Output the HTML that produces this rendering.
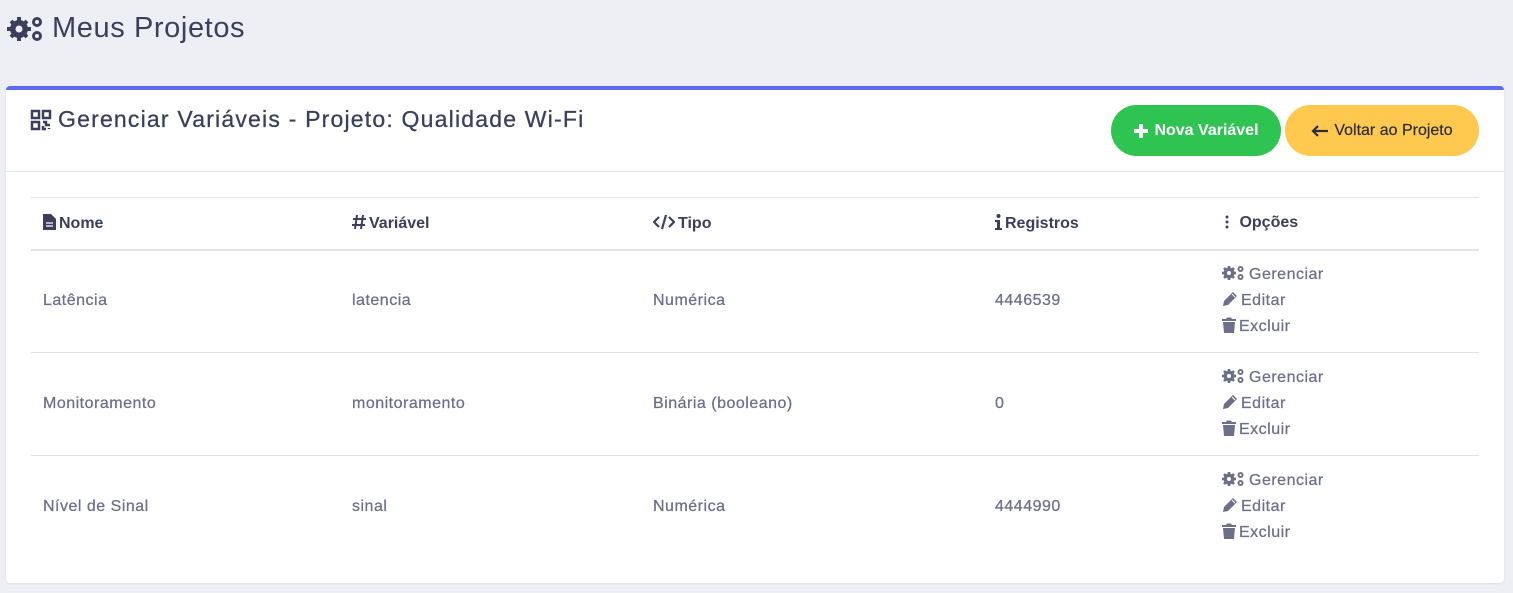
<!DOCTYPE html>
<html><head><meta charset="utf-8"><style>
*{margin:0;padding:0;box-sizing:border-box}
body{width:1513px;height:593px;background:#eeeff5;font-family:"Liberation Sans",sans-serif;position:relative;overflow:hidden}
.t{position:absolute;left:6px;top:12px;font-size:29px;color:#3b3f5c;display:flex;align-items:center;gap:6px;letter-spacing:0.6px}
.card{position:absolute;left:6px;top:86px;width:1498px;height:497px;background:#fff;border-top:4px solid #5c6af5;border-radius:4px;box-shadow:0 1px 2px rgba(0,0,0,.08)}
.ch{position:absolute;left:24px;top:16px;font-size:23px;color:#3b3f5c;display:flex;align-items:center;gap:6px;letter-spacing:1.2px;-webkit-text-stroke:0.3px #3b3f5c}
.hl{position:absolute;left:0;right:0;top:81px;border-top:1px solid #e2e3ec}
.btn{position:absolute;top:15px;height:51px;border-radius:26px;font-size:16px;display:flex;align-items:center;justify-content:center;gap:5px}
.g{left:1105px;width:170px;background:#2fc452;color:#fff;font-weight:bold}
.y{left:1279px;width:194px;background:#ffc84f;color:#2b2d3a;-webkit-text-stroke:0.2px #2b2d3a}
table{position:absolute;left:25px;top:107px;width:1448px;border-collapse:collapse;font-size:16px}
th{text-align:left;color:#3b3f5c;font-weight:bold;height:52px;border-top:1px solid #e2e3ec;border-bottom:2px solid #e2e3ec;padding-left:12px}
td{color:#6c6f8a;height:103px;border-bottom:1px solid #e2e3ec;padding-left:12px;letter-spacing:0.5px;-webkit-text-stroke:0.25px #6c6f8a}
tr:last-child td{border-bottom:none}
td.o{line-height:26px}
svg.i{display:inline-block;vertical-align:-2px;margin-right:3px}
</style></head><body>
<div class="t"><svg width="40" height="30" viewBox="0 0 40 30"><g fill="#3b3f5c"><circle cx="13" cy="15" r="9"/><g stroke="#3b3f5c" stroke-width="4"><line x1="13" y1="3" x2="13" y2="27"/><line x1="1" y1="15" x2="25" y2="15"/><line x1="5" y1="7" x2="21" y2="23"/><line x1="21" y1="7" x2="5" y2="23"/></g><circle cx="13" cy="15" r="3.5" fill="#eeeff5"/><circle cx="31" cy="8" r="5"/><circle cx="31" cy="22" r="5"/><circle cx="31" cy="8" r="2" fill="#eeeff5"/><circle cx="31" cy="22" r="2" fill="#eeeff5"/></g></svg>Meus Projetos</div>
<div class="card">
<div class="ch"><svg width="22" height="22" viewBox="0 0 22 22" fill="none" stroke="#3b3f5c" stroke-width="2.5"><rect x="2" y="2" width="7" height="7"/><rect x="13" y="2" width="7" height="7"/><rect x="2" y="13" width="7" height="7"/><path d="M13 13h3v3h4M13 17v3h3M19 19v1"/></svg>Gerenciar Variáveis - Projeto: Qualidade Wi-Fi</div>
<div class="btn g"><svg width="16" height="16" viewBox="0 0 16 16"><path d="M6 1h4v5h5v4h-5v5H6v-5H1V6h5z" fill="#fff"/></svg>Nova Variável</div>
<div class="btn y"><svg width="18" height="12" viewBox="0 0 18 12"><path d="M2 6h15M7 1L2 6l5 5" stroke="#2b2d3a" stroke-width="2.2" fill="none"/></svg>Voltar ao Projeto</div>
<div class="hl"></div>
<table>
<tr>
<th style="width:309px"><svg class="i" width="13" height="16" viewBox="0 0 13 16"><path d="M0 0h8l5 5v11H0z" fill="#3b3f5c"/><path d="M3 9h7M3 12h7" stroke="#fff" stroke-width="1.3"/></svg>Nome</th>
<th style="width:301px"><svg class="i" width="14" height="16" viewBox="0 0 14 16"><path d="M5 1L3 15M11 1L9 15M1 5h13M0 11h13" stroke="#3b3f5c" stroke-width="2"/></svg>Variável</th>
<th style="width:342px"><svg class="i" width="22" height="16" viewBox="0 0 22 16"><path d="M6 3L1 8l5 5M16 3l5 5-5 5M13 1L9 15" stroke="#3b3f5c" stroke-width="2.2" fill="none"/></svg>Tipo</th>
<th style="width:227px"><svg class="i" width="7" height="16" viewBox="0 0 7 16"><circle cx="3.5" cy="2" r="2" fill="#3b3f5c"/><path d="M0 6h5v8h2v2H0v-2h2V8H0z" fill="#3b3f5c"/></svg>Registros</th>
<th><svg class="i" width="10" height="14" viewBox="0 0 10 14"><circle cx="5" cy="2" r="1.5" fill="#3b3f5c"/><circle cx="5" cy="7" r="1.5" fill="#3b3f5c"/><circle cx="5" cy="12" r="1.5" fill="#3b3f5c"/></svg> Opções</th></tr>
<tr><td>Latência</td><td>latencia</td><td>Numérica</td><td>4446539</td><td class="o">OPTS</td></tr>
<tr><td>Monitoramento</td><td>monitoramento</td><td>Binária (booleano)</td><td>0</td><td class="o">OPTS</td></tr>
<tr><td>Nível de Sinal</td><td>sinal</td><td>Numérica</td><td>4444990</td><td class="o">OPTS</td></tr>
</table>
</div>
<script>
var o='<svg class="i" width="24" height="16" viewBox="0 0 24 16"><g fill="#6c6f8a"><circle cx="7" cy="8" r="5.5"/><g stroke="#6c6f8a" stroke-width="2.6"><path d="M7 1v14M0 8h14M2 3l10 10M12 3L2 13"/></g><circle cx="7" cy="8" r="2" fill="#fff"/><circle cx="18.5" cy="4" r="3"/><circle cx="18.5" cy="12" r="3"/><circle cx="18.5" cy="4" r="1.1" fill="#fff"/><circle cx="18.5" cy="12" r="1.1" fill="#fff"/></g></svg>Gerenciar<br><svg class="i" width="16" height="16" viewBox="0 0 16 16"><path d="M11 1l4 4-9 9-5 1 1-5z" fill="#6c6f8a"/><path d="M10 3l3 3" stroke="#fff" stroke-width="1"/></svg>Editar<br><svg class="i" width="14" height="16" viewBox="0 0 14 16"><path d="M0 2h4l1-1.5h4L10 2h4v2H0z M1 5h12l-1 11H2z" fill="#6c6f8a"/></svg>Excluir';
document.querySelectorAll('td.o').forEach(function(t){t.innerHTML=o});
</script>
</body></html>
